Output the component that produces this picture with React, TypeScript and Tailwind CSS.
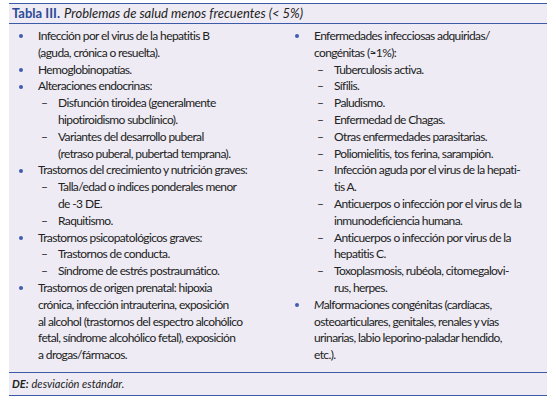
import React from 'react';

type Item = { lines: React.ReactNode[]; subs?: React.ReactNode[][] };

const left: Item[] = [
  { lines: ['Infección por el virus de la hepatitis B', '(aguda, crónica o resuelta).'] },
  { lines: ['Hemoglobinopatías.'] },
  {
    lines: ['Alteraciones endocrinas:'],
    subs: [
      ['Disfunción tiroidea (generalmente', 'hipotiroidismo subclínico).'],
      ['Variantes del desarrollo puberal', '(retraso puberal, pubertad temprana).'],
    ],
  },
  {
    lines: ['Trastornos del crecimiento y nutrición graves:'],
    subs: [['Talla/edad o índices ponderales menor', 'de -3 DE.'], ['Raquitismo.']],
  },
  {
    lines: ['Trastornos psicopatológicos graves:'],
    subs: [['Trastornos de conducta.'], ['Síndrome de estrés postraumático.']],
  },
  {
    lines: [
      'Trastornos de origen prenatal: hipoxia',
      'crónica, infección intrauterina, exposición',
      'al alcohol (trastornos del espectro alcohólico',
      'fetal, síndrome alcohólico fetal), exposición',
      'a drogas/fármacos.',
    ],
  },
];

const right: Item[] = [
  {
    lines: ['Enfermedades infecciosas adquiridas/', 'congénitas (≈1%):'],
    subs: [
      ['Tuberculosis activa.'],
      ['Sífilis.'],
      ['Paludismo.'],
      ['Enfermedad de Chagas.'],
      ['Otras enfermedades parasitarias.'],
      ['Poliomielitis, tos ferina, sarampión.'],
      ['Infección aguda por el virus de la hepati-', 'tis A.'],
      ['Anticuerpos o infección por el virus de la', 'inmunodeficiencia humana.'],
      ['Anticuerpos o infección por virus de la', 'hepatitis C.'],
      ['Toxoplasmosis, rubéola, citomegalovi-', 'rus, herpes.'],
    ],
  },
  {
    lines: [
      <>
        <span className="italic">M</span>alformaciones congénitas (cardíacas,
      </>,
      'osteoarticulares, genitales, renales y vías',
      'urinarias, labio leporino-paladar hendido,',
      'etc.).',
    ],
  },
];

function Lines({ lines }: { lines: React.ReactNode[] }) {
  return (
    <div className="flex flex-col">
      {lines.map((l, i) => (
        <span key={i} className="whitespace-nowrap">
          {l}
        </span>
      ))}
    </div>
  );
}

function Column({ items }: { items: Item[] }) {
  return (
    <div className="flex flex-col">
      {items.map((it, i) => (
        <div key={i} className="flex">
          <span className="w-[29px] shrink-0 flex h-[16.8px] items-center pl-[10px]">
            <span className="w-[4px] h-[4px] rounded-full bg-[#3f5cb0]" />
          </span>
          <div className="flex flex-col">
            <Lines lines={it.lines} />
            {it.subs?.map((s, j) => (
              <div key={j} className="flex">
                <span className="w-[20px] shrink-0 pl-[3px]">–</span>
                <Lines lines={s} />
              </div>
            ))}
          </div>
        </div>
      ))}
    </div>
  );
}

export default function App() {
  return (
    <div
      className="w-[556px] h-[401px] bg-white pt-[3px] px-[9px] text-[#222]"
      style={{ fontFamily: 'Lato, "Open Sans", sans-serif' }}
    >
      <div className="bg-[#eeebf4]">
        <div className="h-[21px] border-y border-[#3b5aa8] flex items-center px-[3px] text-[13px]">
          <span className="font-bold text-[#2c4a98]">Tabla III.</span>
          <span className="italic ml-[4px]">Problemas de salud menos frecuentes (&lt; 5%)</span>
        </div>
        <div className="grid grid-cols-[276px_266px] pt-[4px] pb-[8px] text-[12px] leading-[16.8px] tracking-[-0.62px]">
          <Column items={left} />
          <Column items={right} />
        </div>
        <div className="h-[24px] border-y border-[#3b5aa8] flex items-center px-[3px] italic text-[11px]">
          <span className="font-bold">DE:</span>
          <span className="ml-[3px]">desviación estándar.</span>
        </div>
      </div>
    </div>
  );
}
